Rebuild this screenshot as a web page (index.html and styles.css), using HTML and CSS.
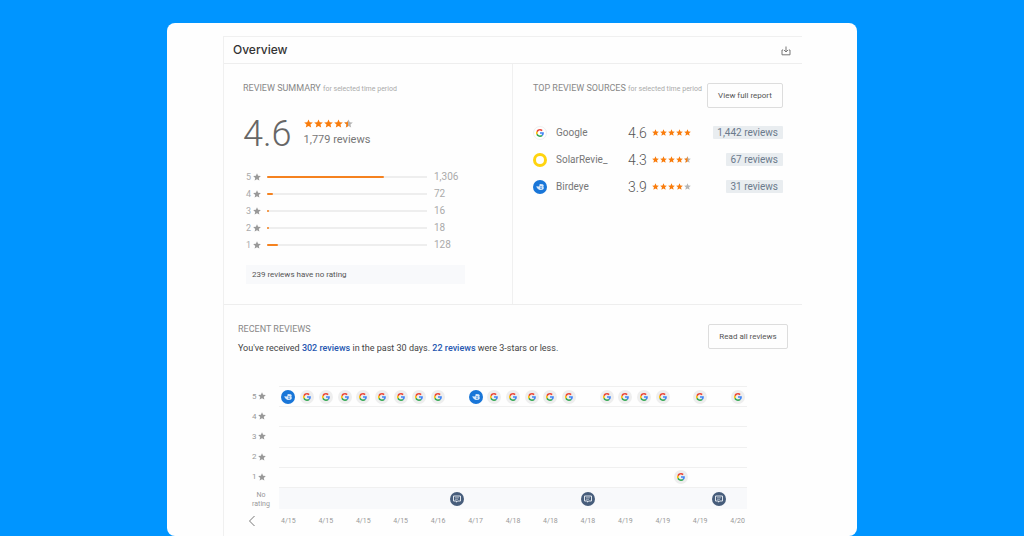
FILE: index.html
```html
<!DOCTYPE html>
<html lang="en">

<head>
  <meta charset="UTF-8" />
  <meta name="viewport" content="width=device-width, initial-scale=1.0" />
  <title>Overview</title>
  <link rel="stylesheet" href="styles.css">
</head>

<body>
  <svg class="sprite" aria-hidden="true">
    <symbol id="star" viewBox="0 0 24 24">
      <path d="M12 1l3.3 7.6 8.2.7-6.2 5.4 1.9 8.1L12 18.5l-7.2 4.3 1.9-8.1L.5 9.3l8.2-.7z" />
    </symbol>
    <symbol id="google" viewBox="0 0 48 48">
      <path fill="#ea4335" d="M24 9.5c3.5 0 6.7 1.2 9.2 3.6l6.9-6.9C35.9 2.4 30.5 0 24 0 14.6 0 6.5 5.4 2.6 13.2l8 6.2C12.4 13.7 17.7 9.5 24 9.5z" />
      <path fill="#4285f4" d="M47 24.5c0-1.6-.2-3.1-.4-4.5H24v9h12.9c-.6 3-2.2 5.5-4.7 7.2l7.7 6C44.4 38 47 31.8 47 24.5z" />
      <path fill="#fbbc05" d="M10.5 28.6c-.5-1.5-.8-3-.8-4.6s.3-3.1.8-4.6l-8-6.2C.9 16.5 0 20.1 0 24s.9 7.5 2.6 10.8z" />
      <path fill="#34a853" d="M24 48c6.5 0 11.9-2.1 15.9-5.8l-7.7-6c-2.2 1.5-4.9 2.3-8.2 2.3-6.3 0-11.6-4.2-13.5-9.9l-8 6.2C6.5 42.6 14.6 48 24 48z" />
    </symbol>
    <symbol id="birdeye" viewBox="0 0 14 14">
      <circle cx="7" cy="7" r="7" fill="#1976d8" />
      <path fill="#d9e9fa" d="M3.2 6.2l3 .3.5-2.6 3 .4c1.2.4 1.3 1.7.6 2.4 1 .9.5 2.6-.8 3l-2.7.3C5.2 9.6 4 8.2 3.2 6.2z" />
      <path fill="none" stroke="#1976d8" stroke-width=".7" d="M7 6.8h2.2M7 8.3h2" />
    </symbol>
    <symbol id="comment" viewBox="0 0 14 14">
      <circle cx="7" cy="7" r="7" fill="#475d7b" />
      <path fill="none" stroke="#dfe5ec" d="M3.5 4h7v5H7.5L6.5 10.2V9h-3z" />
      <path fill="none" stroke="#b9c4d1" stroke-width=".8" d="M5 5.8h4M5 7.3h3" />
    </symbol>
  </svg>

  <main class="card">
    <div class="panel">
      <header class="panel-header">
        <h1>Overview</h1>
        <button class="btn-download" aria-label="Download">
          <svg viewBox="0 0 10 10"><path d="M5 .5V6M3 4l2 2 2-2M2.2 4H1v4.800h8V4H7.8" /></svg>
        </button>
      </header>

      <div class="columns">
        <section class="summary">
          <h2>REVIEW SUMMARY <small>for selected time period</small></h2>
          <div class="score">
            <span class="score-number">4.6</span>
            <div>
              <div class="stars" data-rating="4.5"></div>
              <p>1,779 reviews</p>
            </div>
          </div>
          <ul class="bars" id="bars"></ul>
          <p class="no-rating">239 reviews have no rating</p>
        </section>

        <section class="sources">
          <div class="sources-header">
            <h2>TOP REVIEW SOURCES <small>for selected time period</small></h2>
            <button class="btn">View full report</button>
          </div>
          <table>
            <tr>
              <td class="logo"><span class="dot dot-light"><svg><use href="#google" /></svg></span></td>
              <td class="name">Google</td>
              <td class="value">4.6</td>
              <td><div class="stars small" data-rating="5"></div></td>
              <td class="count"><span>1,442 reviews</span></td>
            </tr>
            <tr>
              <td class="logo"><span class="dot dot-ring"></span></td>
              <td class="name">SolarRevie_</td>
              <td class="value">4.3</td>
              <td><div class="stars small" data-rating="4.5"></div></td>
              <td class="count"><span>67 reviews</span></td>
            </tr>
            <tr>
              <td class="logo"><span class="dot"><svg><use href="#birdeye" /></svg></span></td>
              <td class="name">Birdeye</td>
              <td class="value">3.9</td>
              <td><div class="stars small" data-rating="4"></div></td>
              <td class="count"><span>31 reviews</span></td>
            </tr>
          </table>
        </section>
      </div>

      <section class="recent">
        <div class="recent-header">
          <div>
            <h2>RECENT REVIEWS</h2>
            <p>You've received <a href="#">302 reviews</a> in the past 30 days. <a href="#">22 reviews</a> were 3-stars or less.</p>
          </div>
          <button class="btn btn-wide">Read all reviews</button>
        </div>
        <div class="chart" id="chart"></div>
        <div class="dates">
          <button class="btn-prev" aria-label="Previous">
            <svg viewBox="0 0 8 12"><path d="M6.5 1L1.5 6l5 5" /></svg>
          </button>
          <div class="track" id="dates"></div>
        </div>
      </section>
    </div>
  </main>

  <script>
    const bars = [
      { stars: 5, count: "1,306", width: 73 },
      { stars: 4, count: "72", width: 4 },
      { stars: 3, count: "16", width: 1 },
      { stars: 2, count: "18", width: 1 },
      { stars: 1, count: "128", width: 7 }
    ];

    // each point is placed in one of the 25 slots of its row
    const rows = [
      { label: 5, birdeye: [1, 11], google: [2, 3, 4, 5, 6, 7, 8, 9, 12, 13, 14, 15, 16, 18, 19, 20, 21, 23, 25] },
      { label: 4 },
      { label: 3 },
      { label: 2 },
      { label: 1, google: [22] },
      { label: 0, comment: [10, 17, 24] }
    ];

    const dates = ["4/15", "4/15", "4/15", "4/15", "4/16", "4/17", "4/18", "4/18", "4/18", "4/19", "4/19", "4/19", "4/20"];

    const star = '<svg class="star"><use href="#star" /></svg>';

    document.querySelectorAll(".stars").forEach(box => {
      const rating = Number(box.dataset.rating);
      for (let i = 1; i <= 5; i++) {
        let type = "off";
        if (i <= rating) type = "on";
        else if (i - rating < 1) type = "half";
        box.innerHTML += `<span class="${type}">${star}${type === "half" ? star : ""}</span>`;
      }
    });

    document.getElementById("bars").innerHTML = bars.map(b =>
      `<li><span class="bar-label">${b.stars} ${star}</span><div class="bar"><div class="bar-fill" style="width: ${b.width}%"></div></div><span class="bar-count">${b.count}</span></li>`
    ).join("");

    function points(row, type) {
      return (row[type] || []).map(slot =>
        `<span class="dot dot-${type}" style="grid-column: ${slot}"><svg><use href="#${type}" /></svg></span>`
      ).join("");
    }

    document.getElementById("chart").innerHTML = rows.map(row =>
      `<div class="row ${row.label ? "" : "row-none"}">
        <span class="row-label">${row.label ? row.label + " " + star : "No<br>rating"}</span>
        <div class="track">${points(row, "birdeye")}${points(row, "google")}${points(row, "comment")}</div>
      </div>`
    ).join("");

    document.getElementById("dates").innerHTML = dates.map((date, i) =>
      `<span style="grid-column: ${i * 2 + 1}">${date}</span>`
    ).join("");
  </script>
</body>

</html>
```

FILE: styles.css
```css
* {
  box-sizing: border-box;
}

body {
  margin: 0;
  padding: 23px 20px 0;
  min-height: 100vh;
  display: flex;
  justify-content: center;
  background-color: #0095ff;
  font-family: Roboto, sans-serif;
  font-size: 10px;
  color: #777;
}

h1, h2, p, ul {
  margin: 0;
  padding: 0;
  font-weight: normal;
}

ul {
  list-style: none;
}

button {
  font-family: inherit;
  padding: 0;
  border: none;
  background: none;
  cursor: pointer;
}

svg {
  display: block;
}

.sprite {
  position: absolute;
  width: 0;
  height: 0;
}

.card {
  width: 100%;
  max-width: 690px;
  padding: 13px 55px 0 56px;
  background-color: #fefefe;
  border-radius: 8px;
}

.panel {
  height: 100%;
  border-top: 1px solid #f0f0f0;
  border-left: 1px solid #f0f0f0;
}

.panel-header {
  display: flex;
  justify-content: space-between;
  align-items: center;
  height: 27px;
  padding: 0 11px 0 9px;
  border-bottom: 1px solid #eee;
}

.panel-header h1 {
  margin-bottom: 1px;
  font-family: Inter, sans-serif;
  font-size: 12px;
  line-height: 14px;
  font-weight: 500;
  color: #333;
}

.btn-download svg {
  width: 10px;
  height: 10px;
  margin-top: 2px;
  fill: none;
  stroke: #777;
}

h2 {
  font-size: 9px;
  line-height: 12px;
  color: #888;
  white-space: nowrap;
}

h2 small {
  font-size: 7px;
  color: #aaa;
}

.columns {
  display: grid;
  grid-template-columns: 1fr 1fr;
  border-bottom: 1px solid #eee;
}

.summary {
  padding: 18px 19px 20px;
  border-right: 1px solid #f0f0f0;
}

.score {
  display: flex;
  align-items: center;
  gap: 12px;
  height: 36px;
  margin-top: 21px;
}

.score-number {
  font-size: 36px;
  font-weight: 300;
  line-height: 36px;
  color: #666;
}

.score p {
  margin-top: 5px;
  font-size: 11px;
  line-height: 14px;
}

.stars {
  display: flex;
  gap: 1px;
}

.score .stars {
  margin-top: -2px;
}

.stars span {
  position: relative;
}

.star {
  width: 9px;
  height: 9px;
  fill: #f97c0c;
}

.off .star,
.half .star:first-child {
  fill: #b5b5b5;
}

.half .star:last-child {
  position: absolute;
  top: 0;
  left: 0;
  clip-path: inset(0 50% 0 0);
}

.small .star {
  width: 7px;
  height: 7px;
}

.bars {
  margin: 16px 0 0 3px;
}

.bars li {
  display: flex;
  align-items: center;
  height: 17px;
  color: #aaa;
}

.bar-label {
  display: flex;
  align-items: center;
  gap: 2px;
  width: 21px;
  font-size: 9px;
}

.bar-label .star,
.row-label .star {
  width: 8px;
  height: 8px;
  fill: #999;
}

.bar {
  width: 160px;
  height: 2px;
  background-color: #eee;
}

.bar-fill {
  height: 2px;
  border-radius: 1px;
  background-color: #f5821f;
}

.bar-count {
  margin-left: 7px;
}

.no-rating {
  max-width: 219px;
  margin: 12px 0 0 3px;
  padding: 0 6px;
  font-size: 8px;
  line-height: 19px;
  color: #555;
  background-color: #f8f9fb;
}

.sources {
  padding: 18px 19px 0 20px;
}

.sources-header {
  display: flex;
  justify-content: space-between;
}

.btn {
  width: 76px;
  height: 25px;
  border: 1px solid #ddd;
  border-radius: 2px;
  font-size: 8px;
  color: #555;
}

.sources-header .btn,
.recent-header .btn {
  margin-top: 1px;
}

.recent-header .btn-wide {
  width: 80px;
}

table {
  width: 100%;
  margin-top: 11px;
  border-collapse: collapse;
}

td {
  height: 27px;
  padding: 0;
}

.logo {
  width: 23px;
}

.name {
  width: 72px;
  font-size: 10px;
}

.value {
  width: 24px;
  font-size: 14px;
  font-weight: 300;
  color: #555;
}

.count {
  text-align: right;
}

.count span {
  display: inline-block;
  padding: 0 5px 0 4px;
  line-height: 13px;
  border-radius: 1px;
  color: #6b7a8c;
  background-color: #e9edf0;
}

.dot {
  display: flex;
  justify-content: center;
  align-items: center;
  width: 14px;
  height: 14px;
  border-radius: 50%;
}

.dot svg {
  width: 14px;
  height: 14px;
}

.dot-light {
  border: 1px solid #f0f0f0;
}

.dot-google {
  background-color: #eee;
}

.dot-light svg,
.dot-google svg {
  width: 8px;
  height: 8px;
}

.dot-ring {
  border: 3px solid #ffd40f;
}

.recent-header {
  display: flex;
  justify-content: space-between;
  padding: 18px 14px 0;
}

.recent-header p {
  margin-top: 6px;
  font-size: 9px;
  line-height: 14px;
  color: #444;
}

.recent-header a {
  font-weight: 500;
  color: #2657b0;
  text-decoration: none;
}

.chart {
  display: grid;
  grid-template-rows: repeat(6, 1fr);
  height: 123px;
  margin-top: 31px;
}

.row,
.dates {
  display: flex;
  margin-right: 55px;
}

.row-label {
  display: flex;
  align-items: center;
  gap: 1px;
  width: 55px;
  padding-left: 28px;
  font-size: 8px;
  color: #999;
}

.row-none .row-label {
  display: block;
  padding: 4px 0 0 19px;
  font-size: 7px;
  line-height: 9px;
  text-align: center;
}

.track {
  display: grid;
  grid-template-columns: repeat(25, 1fr);
  flex: 1;
  align-items: center;
  justify-items: center;
  border-top: 1px solid #f0f0f0;
}

.track span {
  grid-row: 1;
}

.row-none .track {
  background-color: #f8f9fb;
}

.dates {
  align-items: center;
  height: 24px;
  font-size: 7px;
  color: #999;
}

.dates .track {
  border: none;
}

.btn-prev {
  width: 55px;
  padding-left: 24px;
}

.btn-prev svg {
  width: 8px;
  height: 12px;
  fill: none;
  stroke: #777;
}
```
